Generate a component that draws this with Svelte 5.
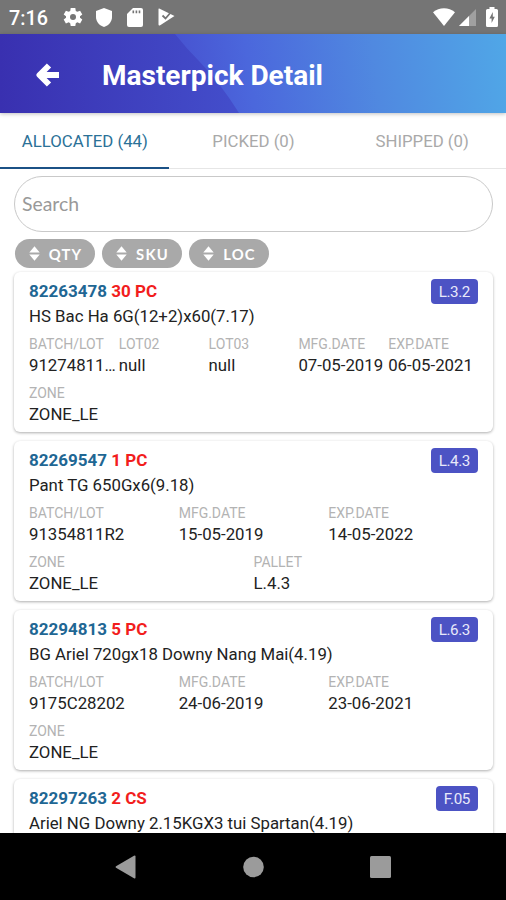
<script>
  const tabs = ['ALLOCATED (44)', 'PICKED (0)', 'SHIPPED (0)'];
  const sorts = ['QTY', 'SKU', 'LOC'];

  let activeTab = $state(0);
  let search = $state('');

  const items = [
    {
      sku: '82263478',
      qty: '30 PC',
      loc: 'L.3.2',
      name: 'HS Bac Ha 6G(12+2)x60(7.17)',
      rows: [
        [
          ['BATCH/LOT', '91274811…'],
          ['LOT02', 'null'],
          ['LOT03', 'null'],
          ['MFG.DATE', '07-05-2019'],
          ['EXP.DATE', '06-05-2021']
        ],
        [['ZONE', 'ZONE_LE']]
      ]
    },
    {
      sku: '82269547',
      qty: '1 PC',
      loc: 'L.4.3',
      name: 'Pant TG 650Gx6(9.18)',
      rows: [
        [
          ['BATCH/LOT', '91354811R2'],
          ['MFG.DATE', '15-05-2019'],
          ['EXP.DATE', '14-05-2022']
        ],
        [
          ['ZONE', 'ZONE_LE'],
          ['PALLET', 'L.4.3']
        ]
      ]
    },
    {
      sku: '82294813',
      qty: '5 PC',
      loc: 'L.6.3',
      name: 'BG Ariel 720gx18 Downy Nang Mai(4.19)',
      rows: [
        [
          ['BATCH/LOT', '9175C28202'],
          ['MFG.DATE', '24-06-2019'],
          ['EXP.DATE', '23-06-2021']
        ],
        [['ZONE', 'ZONE_LE']]
      ]
    },
    {
      sku: '82297263',
      qty: '2 CS',
      loc: 'F.05',
      name: 'Ariel NG Downy 2.15KGX3 tui Spartan(4.19)',
      rows: []
    }
  ];
</script>

<div class="screen">
  <div class="status-bar">
    <span class="time">7:16</span>
    <svg class="gear" width="20" height="20" viewBox="0 0 20 20">
      <path d="M7.700 1h4.600l.5 2.900 1.500.9 2.800-1.100 2.200 3.900-2.300 1.700v1.500l2.300 1.700-2.200 3.900-2.800-1.100-1.500.9-.5 2.800H7.700l-.5-2.800-1.500-.9-2.800 1.100-2.200-3.900L3 10.800V9.300L.7 7.600l2.200-3.900 2.800 1.100 1.500-.9z" />
      <circle class="cut" cx="10" cy="10" r="3" />
    </svg>
    <svg class="shield" width="16" height="19" viewBox="0 0 16 19">
      <path d="M8 0l8 3v6c0 4.700-3.300 8.500-8 10C3.300 17.500 0 13.700 0 9V3z" />
    </svg>
    <svg class="sd" width="16" height="19" viewBox="0 0 16 19">
      <path d="M6 0h8a2 2 0 0 1 2 2v15a2 2 0 0 1-2 2H2a2 2 0 0 1-2-2V6z" />
      <path class="cut" d="M5.500 2.500h1.600v2.800H5.500zM8.600 2.500h1.600v2.800H8.600zM11.700 2.500h1.600v2.800h-1.600z" />
    </svg>
    <svg class="play" width="17" height="18" viewBox="0 0 17 18">
      <path d="M1.200.5L16.500 8 1.800 17.500Q.5 17.800.5 16.500V1Q.6.2 1.200.5z" />
      <path class="check" d="M4.500 7.500l3 3L13.500 3.500" />
    </svg>
    <span class="spacer"></span>
    <svg class="wifi" width="22" height="18" viewBox="0 0 23 18" preserveAspectRatio="none">
      <path d="M11.500 18L0 4.300C6.500-1.200 16.500-1.200 23 4.300z" />
    </svg>
    <svg class="signal" width="17" height="17" viewBox="0 0 17 17">
      <path class="faint" d="M0 17L17 0v17z" />
      <path d="M0 17l10-10v10z" />
    </svg>
    <svg class="battery" width="12" height="20" viewBox="0 0 12 20">
      <path d="M3.500 2V0h5v2H10.500A1.500 1.500 0 0 1 12 3.500v15a1.500 1.500 0 0 1-1.500 1.500h-9A1.500 1.500 0 0 1 0 18.500v-15A1.500 1.500 0 0 1 1.500 2z" />
      <path class="cut" d="M6.800 5L3.400 11.500h2.200V16l3.200-6.300H6.800z" />
    </svg>
  </div>

  <header class="header">
    <svg class="header-bg" viewBox="0 0 506 79" preserveAspectRatio="none">
      <defs>
        <linearGradient id="base" x1="0" y1="0" x2="506" y2="0" gradientUnits="userSpaceOnUse">
          <stop offset="0" stop-color="#3930b0" />
          <stop offset="0.5" stop-color="#4450cd" />
        </linearGradient>
        <linearGradient id="light" x1="175" y1="40" x2="506" y2="0" gradientUnits="userSpaceOnUse">
          <stop offset="0" stop-color="#4752d0" />
          <stop offset="0.22" stop-color="#4b67dc" />
          <stop offset="0.6" stop-color="#5089e0" />
          <stop offset="1" stop-color="#50a7e7" />
        </linearGradient>
      </defs>
      <rect width="506" height="79" fill="url(#base)" />
      <path d="M175 0Q186 14 199 27Q221 50 239 79H506V0z" fill="url(#light)" />
    </svg>
    <button class="back" aria-label="Back">
      <svg width="26" height="26" viewBox="0 0 26 26">
        <path d="M13 3.500L3.500 13l9.500 9.500M5 13h18" />
      </svg>
    </button>
    <h1>Masterpick Detail</h1>
  </header>

  <nav class="tabs">
    {#each tabs as tab, i}
      <button class="tab" class:active={activeTab === i} onclick={() => (activeTab = i)}>
        <span>{tab}</span>
      </button>
    {/each}
  </nav>

  <main class="content">
    <input class="search" type="text" placeholder="Search" bind:value={search} />

    <div class="sorts">
      {#each sorts as sort}
        <button class="sort">
          <svg width="11" height="15" viewBox="0 0 11 15">
            <path d="M5.500.3L10.700 6.500H.3zM5.500 14.700L.3 8.500h10.400z" />
          </svg>
          <span>{sort}</span>
        </button>
      {/each}
    </div>

    <div class="list">
      {#each items as item}
        <div class="card">
          <div class="card-head">
            <div class="title">
              <span class="sku">{item.sku}</span>
              <span class="qty">{item.qty}</span>
            </div>
            <span class="badge">{item.loc}</span>
          </div>
          <div class="name"><span>{item.name}</span></div>
          {#each item.rows as row}
            <div class="fields">
              {#each row as [label, value]}
                <div class="field">
                  <div class="label">{label}</div>
                  <div class="value">{value}</div>
                </div>
              {/each}
            </div>
          {/each}
        </div>
      {/each}
    </div>
  </main>

  <footer class="nav-bar">
    <svg width="21" height="24" viewBox="0 0 21 24">
      <path d="M19 .7Q20.500 0 20.500 1.500v21q0 1.500-1.500.8L1 12.800Q0 12 1 11.200z" />
    </svg>
    <svg width="21" height="22" viewBox="0 0 21 22">
      <circle cx="10.500" cy="11" r="10.300" />
    </svg>
    <svg width="21" height="22" viewBox="0 0 21 22">
      <rect width="21" height="22" rx="1.500" />
    </svg>
  </footer>
</div>

<style>
  :global(body) {
    margin: 0;
    background: #fff;
  }

  .screen {
    width: 506px;
    height: 900px;
    display: flex;
    flex-direction: column;
    overflow: hidden;
    background: #fff;
    font-family: Roboto, sans-serif;
  }

  button {
    border: 0;
    padding: 0;
    background: none;
    font-family: inherit;
  }

  .status-bar {
    flex: none;
    display: flex;
    align-items: center;
    box-sizing: border-box;
    height: 34px;
    padding: 0 8px 0 9px;
    background: #757575;
    color: #fff;
    fill: #fff;
  }

  .time {
    width: 54px;
    font-size: 19.8px;
    font-weight: 500;
    line-height: 34px;
    padding-top: 3px;
  }

  .shield { margin-left: 13px; }
  .sd { margin-left: 15px; }
  .play { margin-left: 15px; }
  .spacer { flex: 1; }
  .wifi { margin-right: 4px; }
  .signal { margin-right: 10px; }
  .cut { fill: #757575; }
  .check { fill: none; stroke: #757575; stroke-width: 1.8; }
  .faint { fill: #a0a0a0; }

  .header {
    flex: none;
    display: flex;
    align-items: center;
    position: relative;
    z-index: 1;
    height: 79px;
    box-shadow: 0 1px 4px rgba(0, 0, 0, 0.25);
  }

  .header-bg {
    position: absolute;
    inset: 0;
    width: 100%;
    height: 100%;
  }

  .back {
    position: relative;
    display: flex;
    margin: 2px 0 0 36px;
  }

  .back path {
    fill: none;
    stroke: #fff;
    stroke-width: 6;
    stroke-linejoin: round;
  }

  h1 {
    position: relative;
    margin: 3px 0 0 40px;
    color: #fff;
    font-size: 28px;
    font-weight: 700;
    white-space: nowrap;
  }

  .tabs {
    flex: none;
    display: grid;
    grid-template-columns: repeat(3, 1fr);
    height: 56px;
    box-sizing: border-box;
    border-bottom: 1px solid #e6e6e6;
  }

  .tab {
    height: 56px;
    box-sizing: border-box;
    padding: 2px 0 0 1px;
    color: #a9a9a9;
    font-size: 16.8px;
    border-bottom: 2px solid transparent;
  }

  .tab.active {
    color: #2b7197;
    border-bottom-color: #1b5186;
  }

  .content {
    flex: 1;
    min-height: 0;
    overflow: hidden;
    padding: 7px 13px 0 14px;
  }

  .search {
    display: block;
    box-sizing: border-box;
    width: 479px;
    height: 56px;
    padding: 0 7px 1px;
    border: 1px solid #c9c9c9;
    border-radius: 28px;
    outline: none;
    font-family: Lato, sans-serif;
    font-size: 19.4px;
    background: #fff;
  }

  .search::placeholder {
    color: #999;
  }

  .sorts {
    display: flex;
    gap: 7px;
    margin: 7px 0 0 1px;
  }

  .sort {
    display: flex;
    align-items: center;
    justify-content: center;
    gap: 9px;
    box-sizing: border-box;
    width: 80px;
    height: 29px;
    padding-left: 1px;
    border-radius: 15px;
    background: #a9a9a9;
    color: #fff;
    fill: #fff;
    font-family: Lato, sans-serif;
    font-size: 14.8px;
    font-weight: 700;
    letter-spacing: 1.2px;
  }

  .list {
    display: flex;
    flex-direction: column;
    gap: 8.5px;
    margin-top: 4.2px;
  }

  .card {
    flex: none;
    box-sizing: border-box;
    height: 160.3px;
    padding: 7px 15px 0;
    border-radius: 6px;
    background: #fff;
    box-shadow: 0 1px 3px rgba(0, 0, 0, 0.32);
  }

  .card-head {
    display: flex;
    justify-content: space-between;
    height: 25px;
  }

  .title {
    font-size: 17px;
    font-weight: 700;
    line-height: 24px;
  }

  .sku { color: #1f6794; }
  .qty { color: #f21d1d; }

  .badge {
    box-sizing: border-box;
    height: 25px;
    padding: 0 8px;
    border-radius: 4px;
    background: #4c53c4;
    color: #e8e9fa;
    font-size: 15.2px;
    font-weight: 400;
    line-height: 26px;
    letter-spacing: -0.4px;
  }

  .name {
    height: 24px;
    color: #222;
    font-size: 16.8px;
    line-height: 24px;
    white-space: nowrap;
  }

  .fields {
    display: flex;
    height: 43px;
    margin-top: 6px;
  }

  .field {
    flex: 1 1 0;
    min-width: 0;
  }

  .label {
    color: #b3b3b3;
    font-size: 14px;
    line-height: 20px;
  }

  .value {
    color: #222;
    font-size: 16.8px;
    line-height: 23px;
    white-space: nowrap;
  }

  .nav-bar {
    flex: none;
    display: flex;
    align-items: center;
    justify-content: space-between;
    box-sizing: border-box;
    height: 67px;
    padding: 0 115px;
    background: #000;
    fill: #9b9b9b;
  }
</style>
